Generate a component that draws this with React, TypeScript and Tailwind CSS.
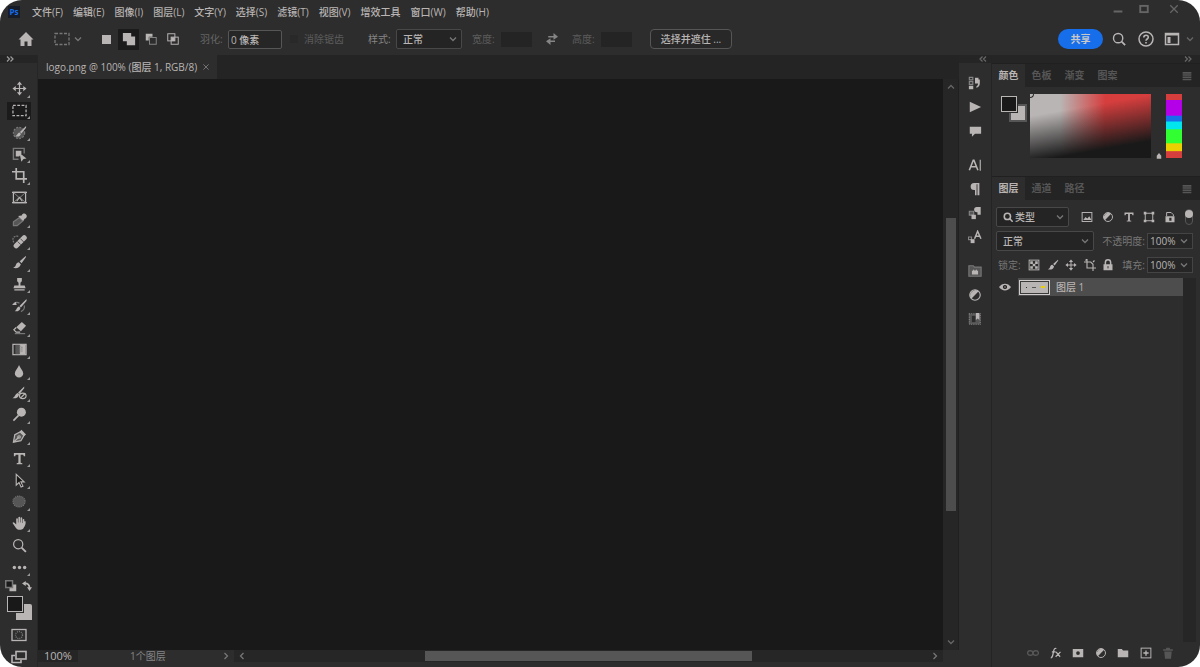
import { useState } from "react";
import type { ReactNode } from "react";

const menus = [
  "文件(F)",
  "编辑(E)",
  "图像(I)",
  "图层(L)",
  "文字(Y)",
  "选择(S)",
  "滤镜(T)",
  "视图(V)",
  "增效工具",
  "窗口(W)",
  "帮助(H)",
];

function Icon({ children, className = "size-4" }: { children: ReactNode; className?: string }) {
  return (
    <svg viewBox="0 0 16 16" fill="none" stroke="currentColor" strokeWidth="1.3" className={className} aria-hidden="true">
      {children}
    </svg>
  );
}

const fill = { fill: "currentColor", stroke: "none" };

const Chevron = ({ className = "size-2" }: { className?: string }) => (
  <Icon className={className}>
    <path d="M2 5l6 6 6-6" strokeWidth="2.6" />
  </Icon>
);

const contrast = (
  <>
    <circle cx="8" cy="8" r="6" />
    <path d="M12.2 3.800A6 6 0 0 0 3.800 12.200z" {...fill} />
  </>
);

const moveCross = (
  <>
    <path d="M8 3v10M3 8h10" />
    <path d="M8 0.5l2.800 3.500H5.200zM8 15.500l2.800-3.500H5.200zM0.500 8l3.500-2.800v5.600zM15.500 8l-3.500-2.800v5.600z" {...fill} />
  </>
);

const brush = (
  <>
    <path d="M14.6 1L8.2 6.6l2 2.2L15 2z" {...fill} />
    <path d="M7.3 7.6c-2.6.2-2.8 2-3.4 3.6-.4 1-1.3 1.8-2.7 2.3 3 1.200 7.200.5 8.200-3.600z" {...fill} />
  </>
);

const lens = (
  <>
    <circle cx="6.600" cy="6.600" r="4.900" />
    <path d="M10.200 10.200l4.600 4.600" strokeWidth="2" />
  </>
);

const textT = <path d="M2 2h12v3.500h-1.400L12 4H9.200v8.500l1.800.6V14H5v-.9l1.800-.6V4H4l-.6 1.500H2z" {...fill} />;

const tools: { name: string; icon: ReactNode; plain?: boolean }[] = [
  { name: "移动工具", icon: moveCross },
  {
    name: "矩形选框工具",
    icon: <rect x="1" y="2.500" width="14" height="11" strokeDasharray="3 1.600" />,
  },
  {
    name: "套索工具",
    icon: (
      <>
        <circle cx="7.500" cy="8.500" r="6" fill="#565656" stroke="#777" strokeDasharray="2 1.500" />
        <path d="M15 1L8.500 7.500l1.500 1.500L15 3zM8 8c-2.500.5-2 3-4.500 4 3 .8 5.500-.2 6-2.500z" {...fill} />
      </>
    ),
  },
  {
    name: "对象选择工具",
    icon: (
      <>
        <path d="M7 13H1.500V1.500H13V7" stroke="#777" strokeWidth="1.500" />
        <path d="M4 4h6v3.500L7.500 10H4zM8 6.500l7.500 5.800-3.200.5L10 15.800z" {...fill} />
      </>
    ),
  },
  { name: "裁剪工具", icon: <path d="M0 4h12.500v12M4.500 0v11.500H16" strokeWidth="1.800" /> },
  {
    name: "图框工具",
    plain: true,
    icon: (
      <>
        <rect x="1.500" y="2.500" width="13" height="11" />
        <path d="M0 2.500h16M0 13.500h16" />
        <path d="M2 3l5.500 5L2 13M14 3L8.500 8l5.500 5" stroke="#858585" strokeWidth="1" />
        <path d="M5 12l3-4 3 4" />
      </>
    ),
  },
  {
    name: "吸管工具",
    icon: (
      <>
        <path d="M8 6l3.500 3.500-6 5H1.500v-4z" fill="#565656" stroke="#777" />
        <path d="M6.500 4.200l5.500 5.500 1.500-2.500c2.200-.6 3-3 1.500-4.600s-4-.9-4.600 1z" {...fill} />
      </>
    ),
  },
  {
    name: "污点修复画笔工具",
    icon: (
      <>
        <path d="M2 9C-.5 5 1.500 1.500 7 2.500" stroke="#777" strokeDasharray="2 1" />
        <path d="M4.500 12.500L13 4" strokeWidth="5.500" strokeLinecap="round" />
        <path d="M6 8l3.500 3.500M9 5l3.500 3.500" stroke="#2d2d2d" strokeWidth=".8" />
      </>
    ),
  },
  { name: "画笔工具", icon: brush },
  {
    name: "仿制图章工具",
    icon: <path d="M5.500 1h5v3.500L9 6v3h4.500l1 3h-13l1-3H7V6L5.500 4.500zM2.500 13h11v1.500h-11z" {...fill} />,
  },
  {
    name: "历史记录画笔工具",
    icon: (
      <>
        <path d="M1 6c2-3 5-3 7-1.500M13 7c1 3-.5 5-3.500 6.500" stroke="#777" />
        <path d="M0 6.500h5L4 3zM15.500 0L8 7.500l1.500 1.500L15.500 2zM7.500 8c-2.500.5-2 3-4.500 5 3 .5 5.500-.5 6-3.500z" {...fill} />
      </>
    ),
  },
  {
    name: "橡皮擦工具",
    icon: (
      <>
        <path d="M10.500 2l4.500 4-5.500 6-5-4.300z" {...fill} />
        <path d="M4.500 8L2 10.500 4.500 13h4.200" />
        <path d="M3 14.500h11" stroke="#777" />
      </>
    ),
  },
  {
    name: "渐变工具",
    icon: (
      <>
        <rect x="1" y="2.500" width="14" height="11" />
        <path d="M8 3h6.500v10H8z" {...fill} />
        <path d="M3.500 3h4.500v10H3.500z" fill="#565656" stroke="none" />
        <path d="M8.500 4v8M10.500 5v6" stroke="#777" strokeDasharray="1 1" />
      </>
    ),
  },
  { name: "模糊工具", icon: <path d="M7.500 1c.8 3 4.500 6 4.500 9a4.500 4.500 0 0 1-9 0c0-3 3.700-6 4.500-9z" {...fill} /> },
  {
    name: "混合器画笔工具",
    icon: (
      <>
        <path d="M13 .5L6.500 7 8 8.500 13 2.500zM6.500 7.500C3.500 8 4 11 .5 13c3.500.5 6.500-.5 7-4z" {...fill} />
        <ellipse cx="11.500" cy="10.500" rx="3.500" ry="3" />
        <path d="M9 13l5-5" />
      </>
    ),
  },
  {
    name: "减淡工具",
    icon: (
      <>
        <circle cx="10" cy="5.500" r="4.800" {...fill} />
        <path d="M7 9l-5.500 5.500" strokeWidth="1.800" />
      </>
    ),
  },
  {
    name: "钢笔工具",
    icon: (
      <>
        <path d="M9 3L3 6 1.500 14l8-1.500 3.500-6z" fill="#565656" />
        <path d="M1.500 14L7 9" />
        <circle cx="7.500" cy="8.500" r="1.300" />
        <path d="M10 .8l5 5-2.500 2L8 3.200z" {...fill} />
      </>
    ),
  },
  { name: "横排文字工具", icon: textT },
  { name: "路径选择工具", icon: <path d="M4.500 1.500v11.500l3-2.800 2.200 4.800 2-1-2.200-4.500h3.500z" fill="#191919" strokeWidth="1.200" /> },
  { name: "椭圆工具", icon: <ellipse cx="7.500" cy="8" rx="6.500" ry="5.800" fill="#565656" stroke="#777" strokeDasharray="1 1" /> },
  {
    name: "抓手工具",
    icon: (
      <path
        d="M4.500 9V3.200a.9.9 0 0 1 1.800 0V7h.5V1.700a.9.900 0 0 1 1.800 0V7h.5V2.200a.9.900 0 0 1 1.800 0v5.300h.5V4.200a.9.900 0 0 1 1.800 0l-.2 1.300h1.500c.4 3-.8 5.500-2 7-1 2.800-6.500 3.200-8.300.3L.6 7.500C.8 6.300 2 6.600 2.600 7.300z"
        {...fill}
      />
    ),
  },
  { name: "缩放工具", icon: lens, plain: true },
  {
    name: "编辑工具栏",
    icon: (
      <>
        <circle cx="2.500" cy="8" r="1.800" {...fill} />
        <circle cx="8" cy="8" r="1.800" {...fill} />
        <circle cx="13.500" cy="8" r="1.800" {...fill} />
      </>
    ),
  },
];

const pilcrow = <path d="M13 1H7a4 4 0 0 0 0 8h1v6h1.800V2.500h1V15H13z" {...fill} />;

const dockGroups: { name: string; icon: ReactNode }[][] = [
  [
    {
      name: "历史记录",
      icon: (
        <>
          <path d="M1.500 1.500h4v3h-4zM1.500 6.500h4v3h-4z" stroke="#858585" />
          <path d="M1 11h5v4H1zM8 2h4v2h1.500v4.500c0 2.500-1.500 4-4 5V12c1.300-.8 2-2 2-3.500H8z" {...fill} />
        </>
      ),
    },
    { name: "动作", icon: <path d="M2 2l13 6-13 6z" {...fill} /> },
    { name: "注释", icon: <path d="M2 3h13v8H8l-3.500 3.500V11H2z" {...fill} /> },
  ],
  [
    {
      name: "字符",
      icon: (
        <>
          <path d="M1.500 14L6 2.500h.8L11.300 14M3.200 10h6.500" strokeWidth="1.800" />
          <path d="M14 2v12.500" />
        </>
      ),
    },
    { name: "段落", icon: pilcrow },
    {
      name: "段落样式",
      icon: (
        <>
          <path d="M14.500 1H10a3 3 0 0 0 0 6h.8v3h3.700z" {...fill} />
          <path d="M1.500 6h5v4.500h-5z" fill="#565656" stroke="#858585" />
          <path d="M4 10h5v5H4z" {...fill} />
        </>
      ),
    },
    {
      name: "字符样式",
      icon: (
        <>
          <path d="M7.500 10L11 1.500 14.800 10M8.700 7.200h5" strokeWidth="1.700" />
          <path d="M.5 8h3.500v3H.5z" stroke="#858585" />
          <path d="M3 10.500h4.500V15H3z" {...fill} />
        </>
      ),
    },
  ],
  [
    {
      name: "库",
      icon: (
        <>
          <path d="M1 2h5l1.500 1.500H15V14H1z" fill="#565656" stroke="#777" />
          <path d="M4.500 7l1 1 1-2 1.500 2 1.500-2 1 2 1-1v5h-7z" {...fill} />
        </>
      ),
    },
    { name: "调整", icon: contrast },
    {
      name: "属性",
      icon: (
        <>
          <rect x="1.500" y="2" width="12.500" height="12" fill="#565656" stroke="#858585" strokeDasharray="1 1" />
          <path d="M4.500 4.500h4v7h-4z" fill="#2d2d2d" stroke="none" />
          <path d="M9 1h4v8l-2-1.500L9 9z" {...fill} />
        </>
      ),
    },
  ],
];

const layerFilters = [
  {
    name: "像素图层",
    icon: (
      <>
        <rect x="1.500" y="2" width="13" height="12" />
        <path d="M3 12l3-4 2.500 2L11 7l3 5z" {...fill} />
      </>
    ),
  },
  { name: "调整图层", icon: contrast },
  { name: "文字图层", icon: textT },
  {
    name: "形状图层",
    icon: (
      <>
        <rect x="3" y="3" width="10" height="10" />
        <path d="M1 1h3.500v3.500H1zM11.500 1H15v3.500h-3.500zM1 11.500h3.500V15H1zM11.500 11.500H15V15h-3.500z" {...fill} />
      </>
    ),
  },
  {
    name: "智能对象",
    icon: (
      <>
        <path d="M3.500 7V2h6l3 3v2" />
        <path d="M2 7h12v8H2z" {...fill} />
        <path d="M7 9h3v4H7z" fill="#2d2d2d" stroke="none" />
      </>
    ),
  },
];

const locks = [
  {
    name: "锁定透明像素",
    icon: (
      <>
        <rect x="1.500" y="1.500" width="13" height="13" />
        <path d="M3 3h3.500v3.500H3zM9.500 3H13v3.500H9.500zM6.300 6.300h3.500v3.500H6.300zM3 9.500h3.500V13H3zM9.500 9.500H13V13H9.500z" {...fill} />
      </>
    ),
  },
  { name: "锁定图像像素", icon: brush },
  { name: "锁定位置", icon: moveCross },
  { name: "防止嵌套", icon: <path d="M4 0v12h12M0 4h9l3 3v9M4 0l-2 2M14 2l-2 2" strokeWidth="1.500" /> },
  {
    name: "锁定全部",
    icon: (
      <>
        <path d="M4.500 8V4.500a3.500 3.500 0 0 1 7 0V8" strokeWidth="2" />
        <path d="M2 7h12v8H2z" {...fill} />
        <path d="M8 9.500v3" stroke="#2d2d2d" />
      </>
    ),
  },
];

const layerActions = [
  {
    name: "链接图层",
    dim: true,
    icon: (
      <>
        <rect x="0.800" y="5" width="7" height="6" rx="3" strokeWidth="1.800" />
        <rect x="8.200" y="5" width="7" height="6" rx="3" strokeWidth="1.800" />
      </>
    ),
  },
  {
    name: "图层样式",
    icon: <path d="M1 14.500c2 0 2.500-2 3-5L5 5c.5-3 1.500-3.500 3.500-3M2.500 6.500h5M8 6.500l5.500 6.500M14 6.500L7.500 13" strokeWidth="1.700" />,
  },
  {
    name: "添加蒙版",
    icon: (
      <>
        <path d="M1 2.500h14v11H1z" {...fill} />
        <circle cx="8" cy="8" r="2.500" fill="#2d2d2d" stroke="none" />
      </>
    ),
  },
  { name: "新建调整图层", icon: contrast },
  { name: "新建组", icon: <path d="M1 2.500h5.500L8 4.500h7v9H1z" {...fill} /> },
  {
    name: "新建图层",
    icon: (
      <>
        <rect x="1.500" y="1.500" width="13" height="13" />
        <path d="M8 4.500v7M4.500 8h7" strokeWidth="1.800" />
      </>
    ),
  },
  { name: "删除图层", dim: true, icon: <path d="M1.500 3h4V1h5v2h4v2h-13zM3 6h10l-1 9.500H4z" {...fill} /> },
];

function Tabs({ names, active, onSelect }: { names: string[]; active: string; onSelect: (name: string) => void }) {
  return (
    <div className="flex h-6 items-center border-t border-[#202020] bg-[#242424] pr-2">
      {names.map((name) => (
        <button
          key={name}
          onClick={() => onSelect(name)}
          className={`h-full w-[33px] pb-0.5 text-center ${name === active ? "bg-[#2d2d2d] font-bold text-[#b9b5b4]" : "font-bold text-[#565656]"}`}
        >
          {name}
        </button>
      ))}
      <button aria-label="面板菜单" className="ml-auto text-[#565656]">
        <Icon className="size-2.5">
          <path d="M1 3h14M1 6.500h14M1 10h14M1 13.500h14" strokeWidth="2.500" />
        </Icon>
      </button>
    </div>
  );
}

function Select({ label, value, search, className }: { label: string; value: string; search?: boolean; className: string }) {
  return (
    <label className={`relative flex h-5 items-center rounded-xs border border-[#484848] bg-[#242424] ${className}`}>
      {search && (
        <Icon className="ml-1.5 size-2.5 shrink-0">
          <circle cx="7" cy="7" r="5" strokeWidth="2.500" />
          <path d="M10.500 10.500l5 5" strokeWidth="2.500" />
        </Icon>
      )}
      <select aria-label={label} className={`w-full appearance-none font-medium outline-none ${search ? "pl-0.5" : "pl-1.5"}`}>
        <option>{value}</option>
      </select>
      <span className="pointer-events-none absolute right-1 text-[#777]">
        <Chevron />
      </span>
    </label>
  );
}

function Percent({ label, id }: { label: string; id: string }) {
  return (
    <>
      <label htmlFor={id} className="ml-auto text-[#777]">
        {label}:
      </label>
      <div className="ml-0.5 flex h-4 w-[46px] items-center border border-[#444] bg-[#262626]">
        <input id={id} defaultValue="100%" className="w-8 pl-0.5 outline-none" />
        <span className="text-[#777]">
          <Chevron />
        </span>
      </div>
    </>
  );
}

function OptionsBar() {
  return (
    <div className="flex h-[30px] shrink-0 items-center pr-1.5 pl-[18px]">
      <button aria-label="主页">
        <Icon>
          <path d="M8 1L.5 8.500h2V15h4v-4.500h3V15h4V8.500h2z" {...fill} />
        </Icon>
      </button>
      <button aria-label="矩形选框工具" className="ml-5 flex items-center gap-1 text-[#777]">
        <Icon>
          <rect x="1" y="2.500" width="14" height="11" strokeDasharray="3 1.500" />
        </Icon>
        <Chevron />
      </button>
      <div className="ml-3.5 flex items-center gap-px">
        <button aria-label="新选区" className="flex size-[21px] items-center justify-center">
          <span className="size-[9px] bg-[#b9b5b4]" />
        </button>
        <button aria-label="添加到选区" className="flex size-[21px] items-center justify-center bg-[#1b1b1b]">
          <Icon className="size-3.5">
            <path d="M1 1h9.500v4H15v10H5.500v-4.500H1z" {...fill} />
          </Icon>
        </button>
        <button aria-label="从选区减去" className="flex size-[21px] items-center justify-center">
          <Icon className="size-3">
            <path d="M1 1h9v4H5v5H1z" {...fill} />
            <rect x="6" y="6" width="9" height="9" stroke="#858585" />
          </Icon>
        </button>
        <button aria-label="与选区交叉" className="flex size-[21px] items-center justify-center">
          <Icon className="size-3">
            <rect x="1" y="1" width="9.500" height="9.500" />
            <rect x="5.500" y="5.500" width="9.500" height="9.500" />
            <path d="M5.500 5.500h5v5h-5z" {...fill} />
          </Icon>
        </button>
      </div>
      <label htmlFor="feather" className="ml-[17px] w-7 text-[#666]">
        羽化:
      </label>
      <input
        id="feather"
        defaultValue="0 像素"
        className="h-[19px] w-[54px] rounded-xs border border-[#565656] bg-[#262626] px-0.5 font-medium outline-none"
      />
      <label className="ml-2 flex items-center gap-1.5 text-[#5c5c5c]">
        <input type="checkbox" disabled className="size-2 appearance-none bg-[#292929]" />
        消除锯齿
      </label>
      <span className="ml-6 w-7 text-[#858585]">样式:</span>
      <Select label="样式" value="正常" className="w-[66px]" />
      <label htmlFor="selection-width" className="ml-2.5 w-[29px] text-[#5c5c5c]">
        宽度:
      </label>
      <input id="selection-width" disabled className="h-[15px] w-[31px] bg-[#242424]" />
      <button aria-label="交换宽度和高度" className="mx-3.5 text-[#858585]">
        <Icon className="size-3">
          <path d="M3 5h9M2 11h10" strokeWidth="1.800" />
          <path d="M10 0l6 5-6 4zM6 7l-6 4 6 5z" {...fill} />
        </Icon>
      </button>
      <label htmlFor="selection-height" className="w-[29px] text-[#5c5c5c]">
        高度:
      </label>
      <input id="selection-height" disabled className="h-[15px] w-[31px] bg-[#242424]" />
      <button className="ml-[18px] h-5 w-[82px] rounded-sm border border-[#565656] bg-[#282828] font-medium">选择并遮住 ...</button>

      <button className="ml-auto h-5 w-[45px] rounded-full bg-[#176eeb] font-bold text-[#c8c8c8]">共享</button>
      <button aria-label="搜索" className="ml-[9px]">
        <Icon className="size-3.5">
          <circle cx="7" cy="7" r="5.300" strokeWidth="1.600" />
          <path d="M11 11l4 4" strokeWidth="2" />
        </Icon>
      </button>
      <button aria-label="帮助" className="ml-3">
        <Icon>
          <circle cx="8" cy="8" r="7" strokeWidth="1.500" />
          <path d="M5.800 6.500c0-3 4.500-3 4.500-.3 0 1.800-2.300 1.800-2.300 3.600M8 11v1.500" strokeWidth="1.600" />
        </Icon>
      </button>
      <button aria-label="选择工作区" className="ml-2.5 flex items-center gap-1.5">
        <Icon>
          <rect x="1.500" y="2.500" width="13" height="11" strokeWidth="1.500" />
          <path d="M2 3.500h12" strokeWidth="2" />
          <path d="M3.500 6h3v6h-3z" {...fill} />
        </Icon>
        <Chevron className="size-2 text-[#666]" />
      </button>
    </div>
  );
}

function Toolbar() {
  const [tool, setTool] = useState("矩形选框工具");

  return (
    <aside className="flex w-[38px] shrink-0 flex-col border-r border-[#262626]">
      <div className="flex h-2 items-center bg-[#252525] pl-1.5 text-[#999]">
        <Icon className="size-2">
          <path d="M2 3l5 5-5 5M9 3l5 5-5 5" strokeWidth="2.500" />
        </Icon>
      </div>
      <div className="mt-[15px] flex min-h-0 flex-1 flex-col">
        {tools.map(({ name, icon, plain }) => (
          <button
            key={name}
            aria-label={name}
            onClick={() => setTool(name)}
            className="relative flex min-h-0 flex-1 items-center pl-[7px]"
          >
            <span className={`flex h-[18px] w-6 items-center pl-[5px] ${name === tool ? "bg-[#1b1b1b]" : ""}`}>
              <Icon className="size-[15px]">{icon}</Icon>
            </span>
            {!plain && (
              <svg viewBox="0 0 4 4" className="absolute right-[7px] bottom-0.5 size-[3px] text-[#999]" aria-hidden="true">
                <path d="M4 0v4H0z" fill="currentColor" />
              </svg>
            )}
          </button>
        ))}
      </div>
      <div className="flex justify-between pt-0.5 pr-[5px] pl-[5px]">
        <button aria-label="默认前景色和背景色">
          <Icon className="size-3">
            <path d="M6 6h9v9H6z" {...fill} />
            <rect x="1" y="1" width="9" height="9" fill="#191919" stroke="#777" strokeWidth="2" />
          </Icon>
        </button>
        <button aria-label="切换前景色和背景色">
          <Icon className="size-2.5">
            <path d="M4 4c5-.5 8 2 8 7" strokeWidth="2.800" />
            <path d="M0 4l6-4v8zM12 16l-4-6h8z" {...fill} />
          </Icon>
        </button>
      </div>
      <div className="mt-1 ml-[7px] grid h-6 w-[25px]">
        <button aria-label="背景色" className="col-start-1 row-start-1 size-4 self-end justify-self-end rounded-tr-xs bg-[#b9b5b4]" />
        <button aria-label="前景色" className="z-10 col-start-1 row-start-1 size-4 border border-[#b9b5b4] bg-[#191919] outline outline-[#2d2d2d]" />
      </div>
      <div className="mt-[7px] flex h-10 flex-col gap-1.5 pl-[11px]">
        <button aria-label="快速蒙版" className="w-4">
          <Icon className="size-4">
            <rect x="1" y="2.500" width="14" height="11" />
            <circle cx="8" cy="8" r="3.500" stroke="#777" strokeDasharray="1 1" />
          </Icon>
        </button>
        <button aria-label="屏幕模式" className="w-4">
          <Icon className="size-4">
            <path d="M4 6.500H1v7h9v-2.500" strokeWidth="1.600" />
            <rect x="5" y="2.500" width="10" height="7.500" strokeWidth="1.600" />
          </Icon>
        </button>
      </div>
    </aside>
  );
}

function DocumentWindow() {
  return (
    <main className="flex min-w-0 flex-1 flex-col">
      <div className="flex h-6 shrink-0 bg-[#242424]">
        <div className="flex w-[179px] items-center bg-[#2d2d2d] pl-2 font-medium whitespace-nowrap">
          logo.png @ 100% (图层 1, RGB/8)
          <button aria-label="关闭文档" className="ml-1.5 text-[#777]">
            <Icon className="size-1.5">
              <path d="M1 1l14 14M15 1L1 15" strokeWidth="2.500" />
            </Icon>
          </button>
        </div>
      </div>
      <div className="flex min-h-0 flex-1">
        <div className="flex-1 bg-[#191919]" />
        <div className="flex w-4 flex-col items-center border-r border-[#202020] bg-[#262626] py-1 text-[#666]">
          <Icon className="size-2">
            <path d="M2 11l6-6 6 6" strokeWidth="2.500" />
          </Icon>
          <div className="flex-[127]" />
          <div className="w-2.5 flex-[293] bg-[#4d4d4d]" />
          <div className="flex-[127]" />
          <Chevron />
        </div>
      </div>
      <div className="flex h-[17px] shrink-0 text-[11px]">
        <div className="flex h-3 w-[196px] items-center">
          <span className="w-10 bg-[#252525] pl-1.5 leading-3">100%</span>
          <span className="ml-[52px] text-[10px] text-[#858585]">1个图层</span>
          <Icon className="mr-1 ml-auto size-2 text-[#777]">
            <path d="M5 2l6 6-6 6" strokeWidth="2.500" />
          </Icon>
        </div>
        <div className="flex h-3 flex-1 items-center bg-[#262626] px-1 text-[#777]">
          <Icon className="size-2">
            <path d="M11 2L5 8l6 6" strokeWidth="2.500" />
          </Icon>
          <div className="flex-[178]" />
          <div className="h-2.5 flex-[327] bg-[#565656]" />
          <div className="flex-[178]" />
          <Icon className="size-2">
            <path d="M5 2l6 6-6 6" strokeWidth="2.500" />
          </Icon>
        </div>
        <div className="w-4" />
      </div>
    </main>
  );
}

function Dock() {
  return (
    <aside className="flex w-[33px] shrink-0 flex-col border-r border-[#242424]">
      <div className="flex h-2 items-center justify-end bg-[#252525] pr-1 text-[#666]">
        <Icon className="size-2">
          <path d="M7 3L2 8l5 5M14 3L9 8l5 5" strokeWidth="2.500" />
        </Icon>
      </div>
      <div className="flex flex-col gap-[18px] pt-3">
        {dockGroups.map((group, i) => (
          <div key={i} className="flex flex-col items-center gap-2">
            {group.map(({ name, icon }) => (
              <button key={name} aria-label={name}>
                <Icon className="size-4 p-px">{icon}</Icon>
              </button>
            ))}
          </div>
        ))}
      </div>
    </aside>
  );
}

function ColorPanel() {
  const [tab, setTab] = useState("颜色");

  return (
    <section className="flex flex-col">
      <Tabs names={["颜色", "色板", "渐变", "图案"]} active={tab} onSelect={setTab} />
      <div className="flex h-[89px] pt-[7px] pr-[18px] pl-[9px]">
        <div className="mt-0.5 grid size-[26px] shrink-0">
          <button aria-label="背景色" className="col-start-1 row-start-1 size-[18px] self-end justify-self-end border-2 border-[#565656] bg-[#b9b5b4]" />
          <button aria-label="前景色" className="z-10 col-start-1 row-start-1 size-4 border border-[#b9b5b4] bg-[#191919] outline outline-[#2d2d2d]" />
        </div>
        <div className="ml-[3px] h-16 flex-1 bg-[linear-gradient(to_right,#b9b5b4_25%,#d63e3e_62%)]">
          <div className="h-full bg-[linear-gradient(170deg,transparent_26%,#191919_80%)]">
            <div className="size-1 rounded-br-full border-r border-b border-[#2d2d2d]" />
          </div>
        </div>
        <div className="flex h-[66px] w-[15px] items-end justify-center pb-px">
          <Icon className="size-1.5">
            <path d="M8 0l6 7v8H2V7z" {...fill} />
          </Icon>
        </div>
        <div className="h-16 w-4 bg-[linear-gradient(#d63e3e_9%,#b400e8_10%_33%,#176eeb_35%_42%,#00e5ee_44%_54%,#32ff32_56%_76%,#ead000_78%_89%,#d63e3e_90%)]" />
      </div>
    </section>
  );
}

function LayersPanel() {
  const [tab, setTab] = useState("图层");

  return (
    <section className="flex min-h-0 flex-1 flex-col">
      <Tabs names={["图层", "通道", "路径"]} active={tab} onSelect={setTab} />
      <div className="mt-[7px] flex items-center justify-between pr-[7px] pl-1">
        <Select label="滤镜类型" value="类型" search className="w-[73px]" />
        <div className="ml-3 flex flex-1 items-center justify-between">
          {layerFilters.map(({ name, icon }) => (
            <button key={name} aria-label={name}>
              <Icon className="size-3">{icon}</Icon>
            </button>
          ))}
          <button aria-label="图层过滤开关" className="flex h-4 w-2 items-start justify-center rounded-full border border-[#565656]">
            <span className="size-2 shrink-0 rounded-full bg-[#b9b5b4]" />
          </button>
        </div>
      </div>
      <div className="mt-1 flex items-center pr-[7px] pl-1">
        <Select label="混合模式" value="正常" className="w-[98px]" />
        <Percent label="不透明度" id="opacity" />
      </div>
      <div className="mt-1 flex h-5 items-center pr-[7px] pl-1.5">
        <span className="w-[30px] text-[#777]">锁定:</span>
        <div className="flex w-[86px] items-center justify-between">
          {locks.map(({ name, icon }) => (
            <button key={name} aria-label={name}>
              <Icon className="size-3">{icon}</Icon>
            </button>
          ))}
        </div>
        <Percent label="填充" id="fill-opacity" />
      </div>
      <div className="mt-[3px] flex min-h-0 flex-1 pr-1">
        <div className="flex h-[18px] flex-1 items-center">
          <button aria-label="指示图层可见性" className="flex w-[26px] justify-center">
            <Icon className="size-3">
              <path d="M0 8c4-6 12-6 16 0-4 6-12 6-16 0z" {...fill} />
              <circle cx="8" cy="8" r="2.800" fill="#191919" stroke="none" />
              <circle cx="8" cy="8" r="1" {...fill} />
            </Icon>
          </button>
          <button className="flex h-full flex-1 items-center bg-[#4d4d4d] pl-px font-medium">
            <span className="flex h-[15px] w-[31px] items-center justify-end gap-px border border-[#d0cccb] bg-[#b9b5b4] pr-1 outline -outline-offset-2 outline-[#3a3a3a]">
              <span className="size-px bg-[#2d2d2d]" />
              <span className="mr-1 ml-1 h-px w-1 bg-[#565656]" />
              <span className="h-0.5 w-1 bg-[#ead000]" />
            </span>
            <span className="ml-1.5">图层 1</span>
          </button>
        </div>
        <div className="w-[13px] bg-[#262626]" />
      </div>
      <div className="flex h-[25px] items-center justify-between pr-[26px] pb-1 pl-[35px]">
        {layerActions.map(({ name, icon, dim }) => (
          <button key={name} aria-label={name} className={dim ? "text-[#565656]" : ""}>
            <Icon className="size-3">{icon}</Icon>
          </button>
        ))}
      </div>
    </section>
  );
}

export default function App() {
  return (
    <div className="flex h-screen flex-col overflow-hidden rounded-[22px] bg-[#2d2d2d] font-['Open_Sans','Noto_Sans_CJK_SC',sans-serif] text-[10px] leading-4 text-[#b9b5b4]">
      <header className="flex h-6 shrink-0 items-center">
        <div className="ml-2 flex h-3 w-3 items-center justify-center bg-[#161d29] text-[8px] font-bold text-[#176eeb]">Ps</div>
        <nav className="ml-3 flex gap-2.5 font-medium">
          {menus.map((menu) => (
            <button key={menu} className="whitespace-nowrap">
              {menu}
            </button>
          ))}
        </nav>
        <div className="mr-[21px] ml-auto flex gap-4 pb-1.5 text-[#666]">
          <button aria-label="最小化">
            <Icon className="size-2.5">
              <path d="M1 12h14" strokeWidth="3" />
            </Icon>
          </button>
          <button aria-label="最大化">
            <Icon className="size-2.5">
              <rect x="2" y="3" width="12" height="10" strokeWidth="3" />
            </Icon>
          </button>
          <button aria-label="关闭" className="ml-1">
            <Icon className="size-2.5">
              <path d="M2 2l12 12M14 2L2 14" strokeWidth="2" />
            </Icon>
          </button>
        </div>
      </header>
      <OptionsBar />
      <div className="flex min-h-0 flex-1 pt-px">
        <Toolbar />
        <DocumentWindow />
        <Dock />
        <div className="flex w-[208px] shrink-0 flex-col">
          <div className="flex h-2 items-center justify-end bg-[#252525] pr-2 text-[#666]">
            <Icon className="size-2">
              <path d="M2 3l5 5-5 5M9 3l5 5-5 5" strokeWidth="2.500" />
            </Icon>
          </div>
          <ColorPanel />
          <LayersPanel />
        </div>
      </div>
    </div>
  );
}
